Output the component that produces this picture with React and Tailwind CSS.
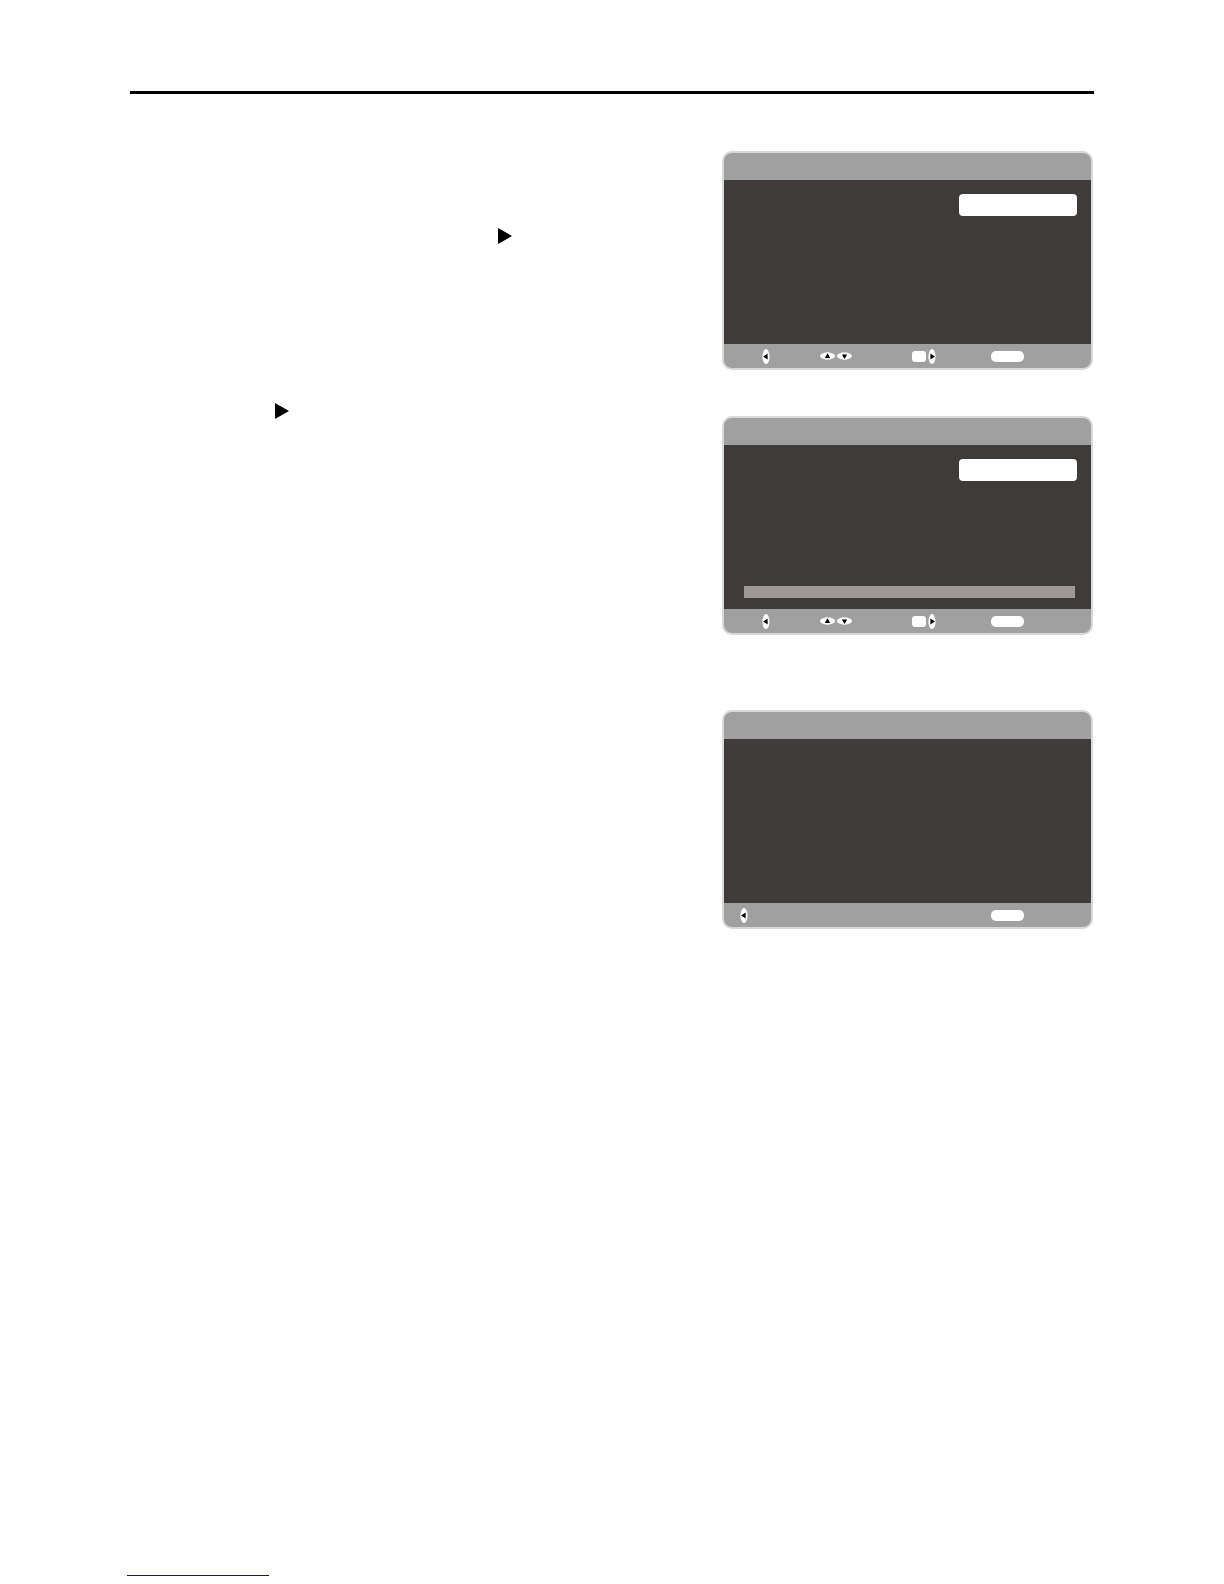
import React from 'react';

// black pointer used in the body copy column
const Pointer = ({ className }) => (
  <svg viewBox="0 0 14 16" className={`block h-4 w-[14px] ${className}`} aria-hidden="true">
    <path d="M0 0 L14 8 L0 16 Z" fill="#000" />
  </svg>
);

const arrows = {
  left: { label: 'Left', box: '0 0 8 15', size: 'w-2 h-[15px]', arrow: 'M1.2 7.5 L5.6 4.6 L5.6 10.4 Z' },
  right: { label: 'Right', box: '0 0 8 15', size: 'w-2 h-[15px]', arrow: 'M2.4 4.6 L7 7.5 L2.4 10.4 Z' },
  up: { label: 'Up', box: '0 0 15 8', size: 'w-[15px] h-2', arrow: 'M7.5 1.2 L10.2 6 L4.8 6 Z' },
  down: { label: 'Down', box: '0 0 15 8', size: 'w-[15px] h-2', arrow: 'M7.5 7 L10.2 2.4 L4.8 2.4 Z' },
};

const ArrowKey = ({ direction, className = '' }) => {
  const { label, box, size, arrow } = arrows[direction];
  const vertical = direction === 'left' || direction === 'right';

  return (
    <button type="button" aria-label={label} className={`block shrink-0 ${className}`}>
      <svg viewBox={box} className={`block ${size}`}>
        {vertical ? (
          <path d="M2.6 0.4 Q4 -0.4 5.4 0.4 C6.6 2 7.6 5 7.6 7.5 C7.6 10 6.6 13 5.4 14.6 Q4 15.4 2.6 14.6 C1.4 13 0.4 10 0.4 7.5 C0.4 5 1.4 2 2.6 0.4 Z" fill="#fff" />
        ) : (
          <path d="M0.4 2.8 C2 1.4 5 0.3 7.5 0.3 C10 0.3 13 1.4 14.6 2.8 Q15.4 4 14.6 5.2 C13 6.6 10 7.7 7.5 7.7 C5 7.7 2 6.6 0.4 5.2 Q-0.4 4 0.4 2.8 Z" fill="#fff" />
        )}
        <path d={arrow} fill="#000" />
      </svg>
    </button>
  );
};

const MenuKey = () => (
  <button type="button" aria-label="Menu" className="ml-auto mr-[67px] block h-[11px] w-[33px] shrink-0 rounded-[5px] bg-white" />
);

const NavKeys = () => (
  <>
    <ArrowKey direction="left" className="ml-[38px]" />
    <ArrowKey direction="up" className="ml-[50px]" />
    <ArrowKey direction="down" className="ml-[2px]" />
    <button type="button" aria-label="OK" className="ml-[60px] block h-[11px] w-[14px] shrink-0 rounded-[3px] bg-white" />
    <ArrowKey direction="right" className="ml-[2px]" />
    <MenuKey />
  </>
);

const OsdPanel = ({ children, keys, className = '' }) => (
  <section className={`overflow-hidden rounded-[10px] border-2 border-[#d9d9d9] bg-[#a0a0a0] ${className}`}>
    <div className="h-[27px]" />
    <div className="flex min-h-[164px] flex-col bg-[#3f3b3a]">{children}</div>
    <div className="flex h-6 items-center">{keys}</div>
  </section>
);

const SelectedField = ({ label }) => (
  <input
    type="text"
    readOnly
    aria-label={label}
    className="mr-[14px] mt-[14px] block h-[22px] w-[118px] self-end rounded bg-white outline-none"
  />
);

const App = () => {
  return (
    <div className="flex min-h-screen flex-col bg-white font-['Liberation_Sans',sans-serif]">
      <main className="px-[130px] pt-[91px]">
        <hr className="h-[3px] border-0 bg-black" />

        <div className="mt-[57px] flex justify-between pr-px">
          <div className="flex-1">
            <Pointer className="ml-[368px] mt-[77px]" />
            <Pointer className="ml-[145px] mt-[159px]" />
          </div>

          {/* on-screen menus */}
          <div className="w-[371px] shrink-0">
            <OsdPanel keys={<NavKeys />}>
              <SelectedField label="First setting" />
            </OsdPanel>

            <OsdPanel keys={<NavKeys />} className="mt-[46px]">
              <SelectedField label="Second setting" />
              <div className="mb-[11px] ml-5 mr-4 mt-auto h-3 bg-[#9f9795]" />
            </OsdPanel>

            <OsdPanel
              className="mt-[75px]"
              keys={
                <>
                  <ArrowKey direction="left" className="ml-4" />
                  <MenuKey />
                </>
              }
            />
          </div>
        </div>
      </main>

      <footer className="mt-auto px-[127px] pb-2">
        <hr className="h-px w-[142px] border-0 bg-[#10108a]" />
      </footer>
    </div>
  );
};

export default App;
